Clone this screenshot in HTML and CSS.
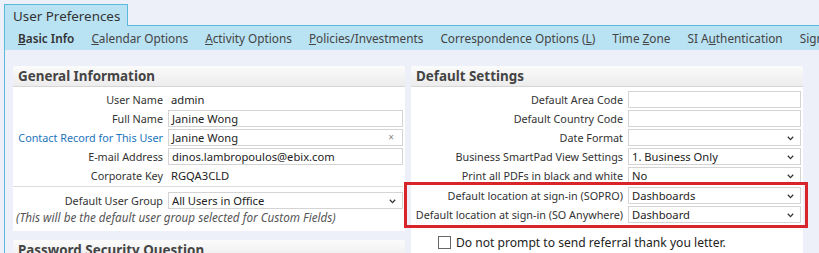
FILE: index.html
```html
<!DOCTYPE html>
<html lang="en">
<head>
  <meta charset="UTF-8" />
  <title>User Preferences</title>
  <link rel="stylesheet" href="styles.css">
</head>
<body>
  <div class="page">
    <div class="tab">User Preferences</div>
    <nav class="subnav">
      <span class="nav-item active"><u>B</u>asic Info</span>
      <span class="nav-item"><u>C</u>alendar Options</span>
      <span class="nav-item"><u>A</u>ctivity Options</span>
      <span class="nav-item"><u>P</u>olicies/Investments</span>
      <span class="nav-item">Correspondence Options (<u>L</u>)</span>
      <span class="nav-item">Time <u>Z</u>one</span>
      <span class="nav-item">SI A<u>u</u>thentication</span>
      <span class="nav-item">Signatures</span>
    </nav>

    <div class="content">
      <div class="col">
        <section class="panel">
          <h2 class="panel-head">General Information</h2>
          <div class="panel-body">
            <div class="rows rows-left">
              <label class="lbl">User Name</label>
              <span class="val">admin</span>
              <label class="lbl">Full Name</label>
              <div class="field">Janine Wong</div>
              <a class="lbl link">Contact Record for This User</a>
              <div class="field">Janine Wong<span class="clear">×</span></div>
              <label class="lbl">E-mail Address</label>
              <div class="field">dinos.lambropoulos@ebix.com</div>
              <label class="lbl">Corporate Key</label>
              <span class="val">RGQA3CLD</span>
            </div>
            <div class="group-sec">
              <div class="rows rows-left">
                <label class="lbl">Default User Group</label>
                <div class="field select">All Users in Office<svg class="chev" width="7" height="5" viewBox="0 0 7 5"><path d="M0.8 0.8L3.5 3.6L6.2 0.8" fill="none" stroke="#333" stroke-width="1.3"/></svg></div>
              </div>
              <p class="note">(This will be the default user group selected for Custom Fields)</p>
            </div>
          </div>
        </section>
        <section class="panel">
          <h2 class="panel-head">Password Security Question</h2>
          <div class="panel-body tall"></div>
        </section>
      </div>

      <div class="col">
        <section class="panel">
          <h2 class="panel-head">Default Settings</h2>
          <div class="panel-body">
            <div class="rows rows-right">
              <label class="lbl">Default Area Code</label>
              <div class="field"></div>
              <label class="lbl">Default Country Code</label>
              <div class="field"></div>
              <label class="lbl">Date Format</label>
              <div class="field select"><svg class="chev" width="7" height="5" viewBox="0 0 7 5"><path d="M0.8 0.8L3.5 3.6L6.2 0.8" fill="none" stroke="#333" stroke-width="1.3"/></svg></div>
              <label class="lbl">Business SmartPad View Settings</label>
              <div class="field select">1. Business Only<svg class="chev" width="7" height="5" viewBox="0 0 7 5"><path d="M0.8 0.8L3.5 3.6L6.2 0.8" fill="none" stroke="#333" stroke-width="1.3"/></svg></div>
              <label class="lbl">Print all PDFs in black and white</label>
              <div class="field select">No<svg class="chev" width="7" height="5" viewBox="0 0 7 5"><path d="M0.8 0.8L3.5 3.6L6.2 0.8" fill="none" stroke="#333" stroke-width="1.3"/></svg></div>
            </div>
            <div class="rows rows-right marked">
              <label class="lbl">Default location at sign-in (SOPRO)</label>
              <div class="field select">Dashboards<svg class="chev" width="7" height="5" viewBox="0 0 7 5"><path d="M0.8 0.8L3.5 3.6L6.2 0.8" fill="none" stroke="#333" stroke-width="1.3"/></svg></div>
              <label class="lbl">Default location at sign-in (SO Anywhere)</label>
              <div class="field select">Dashboard<svg class="chev" width="7" height="5" viewBox="0 0 7 5"><path d="M0.8 0.8L3.5 3.6L6.2 0.8" fill="none" stroke="#333" stroke-width="1.3"/></svg></div>
            </div>
            <div class="check-row">
              <span class="box"></span>
              <span>Do not prompt to send referral thank you letter.</span>
            </div>
          </div>
        </section>
      </div>
    </div>
  </div>
</body>
</html>
```

FILE: styles.css
```css
:root {
  --bg: #eef0f9;
  --blue: #b9e2f3;
  --blue-line: #5ab9dd;
  --text: #333;
  --link: #1c74bb;
}
* { margin: 0; padding: 0; box-sizing: border-box; }
body {
  background: var(--bg);
  color: var(--text);
  font-family: "Noto Sans", "Open Sans", sans-serif;
  font-size: 10.8px;
  overflow: hidden;
}
.page {
  margin: 4px 0 0 4px;
  height: 249px;
  display: flex;
  flex-direction: column;
}
.tab {
  align-self: flex-start;
  position: relative;
  z-index: 1;
  height: 22px;
  margin-bottom: -1px;
  padding: 0 7px 0 8px;
  line-height: 22px;
  font-size: 13.4px;
  color: #333;
  background: var(--blue);
  border: 1px solid var(--blue-line);
  border-bottom: none;
}
.subnav {
  height: 25px;
  display: flex;
  align-items: center;
  gap: 17px;
  padding: 0 0 1px 13px;
  font-size: 11.8px;
  color: #444;
  white-space: nowrap;
  overflow: hidden;
  background: var(--blue);
  border-top: 1px solid var(--blue-line);
  border-left: 1px solid var(--blue-line);
}
.nav-item.active { font-weight: 600; color: #333; }
.content {
  flex: 1;
  display: flex;
  gap: 6px;
  padding: 16px 16px 0 8px;
  border-left: 1px solid var(--blue-line);
  overflow: hidden;
}
.col {
  flex: 1;
  display: flex;
  flex-direction: column;
  gap: 9px;
}
.panel {
  background: #fff;
  border-radius: 3px 3px 0 0;
}
.panel-head {
  height: 21px;
  padding-left: 5px;
  font-size: 13.4px;
  font-weight: 700;
  line-height: 21px;
  color: #444;
  background: linear-gradient(#fbfbfb, #ececec);
  border-bottom: 1px solid #d6d6d6;
  border-radius: 3px 3px 0 0;
}
.panel-body { padding: 4px 2px 5px 0; }
.panel-body.tall { height: 40px; }
.rows {
  display: grid;
  row-gap: 2px;
  column-gap: 5px;
  align-items: center;
}
.rows-left { grid-template-columns: 150px 1fr; }
.rows-right { grid-template-columns: 212px 1fr; }
.lbl {
  text-align: right;
  white-space: nowrap;
  color: var(--text);
}
.link { color: var(--link); }
.val {
  height: 17px;
  line-height: 17px;
  padding-left: 3px;
  font-size: 11.2px;
  color: #222;
}
.field {
  position: relative;
  height: 17px;
  padding-left: 3px;
  line-height: 15px;
  font-size: 11.2px;
  color: #222;
  background: #fff;
  border: 1px solid #d4d4d4;
  white-space: nowrap;
}
.clear {
  position: absolute;
  right: 8px;
  top: 0;
  font-size: 10px;
  color: #888;
}
.chev {
  position: absolute;
  right: 6px;
  top: 6px;
}
.group-sec {
  margin-top: 2px;
  padding-top: 5px;
  border-top: 1px solid #dcdcdc;
}
.note {
  margin-top: 0;
  padding-left: 3px;
  font-size: 11.7px;
  line-height: 17px;
  font-style: italic;
  color: #555;
  white-space: nowrap;
}
.marked {
  position: relative;
  margin-top: 3px;
}
.marked::after {
  content: "";
  position: absolute;
  inset: -5px -7px -5px -7px;
  border: 3px solid #d7252b;
  pointer-events: none;
}
.check-row {
  display: flex;
  align-items: center;
  gap: 5px;
  margin-top: 11px;
  padding-left: 27px;
  font-size: 12.1px;
  color: #222;
}
.box {
  width: 13px;
  height: 13px;
  border: 1px solid #666;
  background: #fff;
}
```
